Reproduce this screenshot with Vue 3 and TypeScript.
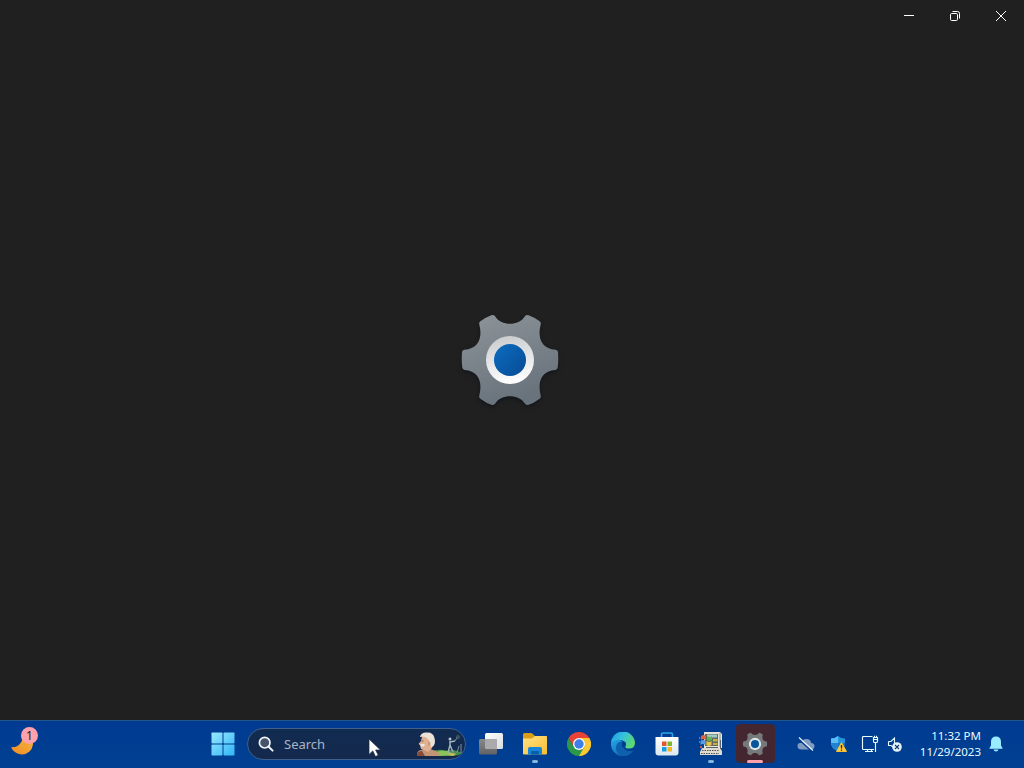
<script setup lang="ts">
import { ref } from 'vue'

const gearPath =
  'M137 51C153 78 207 78 223 51Q227 43 236 46Q255 53 269 64Q274 68 272 74C262 112 274 146 317 149Q323 150 324 156Q326 180 323 204Q321 209 316 210C274 213 262 246 272 286Q274 292 269 296Q252 309 234 315Q227 316 223 309C207 282 153 282 137 309Q133 316 126 315Q108 309 91 296Q86 292 88 286C98 246 86 213 44 210Q39 209 37 204Q34 180 36 156Q37 150 43 149C86 146 98 112 88 74Q86 68 91 64Q105 53 124 46Q133 43 137 51Z'

const badge = ref<number>(1)
const time = ref<string>('11:32 PM')
const date = ref<string>('11/29/2023')
</script>

<template>
  <div class="screen">
    <main class="window">
      <header class="titlebar">
        <button class="caption" aria-label="Minimize">
          <svg width="12" height="12" viewBox="0 0 12 12"><path d="M1 5.5h10" stroke="#fff" /></svg>
        </button>
        <button class="caption" aria-label="Restore">
          <svg width="12" height="12" viewBox="0 0 12 12" fill="none" stroke="#fff">
            <rect x="1.5" y="3.5" width="7" height="7" rx="1.2" />
            <path d="M3.5 1.5h5q2 0 2 2v5" />
          </svg>
        </button>
        <button class="caption" aria-label="Close">
          <svg width="12" height="12" viewBox="0 0 12 12"><path d="M1 1l10 10M11 1L1 11" stroke="#fff" stroke-width="1" /></svg>
        </button>
      </header>
      <section class="splash">
        <svg class="gear" width="120" height="120" viewBox="0 0 360 360">
          <defs>
            <linearGradient id="gearBody" x1="0" y1="0" x2="0.4" y2="1">
              <stop offset="0" stop-color="#8e959a" /><stop offset="1" stop-color="#69737c" />
            </linearGradient>
            <linearGradient id="gearRing" x1="0" y1="0" x2="0.2" y2="1">
              <stop offset="0" stop-color="#c6c8ca" /><stop offset="1" stop-color="#fdfdfd" />
            </linearGradient>
            <linearGradient id="gearHub" x1="0" y1="0" x2="1" y2="1">
              <stop offset="0" stop-color="#0d6cc0" /><stop offset="1" stop-color="#074b94" />
            </linearGradient>
          </defs>
          <path :d="gearPath" fill="url(#gearBody)" />
          <circle cx="180" cy="180" r="72" fill="url(#gearRing)" />
          <circle cx="180" cy="180" r="48" fill="url(#gearHub)" />
        </svg>
      </section>
    </main>

    <footer class="taskbar">
      <div class="widgets">
        <svg width="26" height="20" viewBox="0 0 26 20">
          <defs>
            <linearGradient id="moon" x1="0" y1="1" x2="1" y2="0">
              <stop offset="0" stop-color="#ee8b24" /><stop offset="1" stop-color="#f9b53f" />
            </linearGradient>
          </defs>
          <path d="M0 10.2Q9 11 12 1L21 0Q24 9 18.5 14.5Q14 18.500 8 17Q2.500 15.500 0 10.200Z" fill="url(#moon)" />
        </svg>
        <span class="badge">{{ badge }}</span>
      </div>

      <nav class="apps">
        <div class="app start">
          <svg width="24" height="24" viewBox="0 0 24 24">
            <defs>
              <linearGradient id="win" x1="0" y1="0" x2="24" y2="24" gradientUnits="userSpaceOnUse">
                <stop offset="0" stop-color="#9aeaff" /><stop offset="1" stop-color="#2fb4f6" />
              </linearGradient>
            </defs>
            <g fill="url(#win)">
              <rect x="0.500" y="0.500" width="11" height="11" rx="0.800" /><rect x="12.500" y="0.500" width="11" height="11" rx="0.800" />
              <rect x="0.500" y="12.500" width="11" height="11" rx="0.800" /><rect x="12.500" y="12.500" width="11" height="11" rx="0.800" />
            </g>
          </svg>
        </div>

        <div class="search">
          <svg width="16" height="16" viewBox="0 0 16 16" fill="none">
            <circle cx="6.700" cy="6.700" r="5.300" fill="#46536b" stroke="#f0f3f7" stroke-width="1.700" />
            <path d="M10.700 10.700L14.600 14.600" stroke="#f0f3f7" stroke-width="2" stroke-linecap="round" />
          </svg>
          <span class="placeholder">Search</span>
          <svg class="art" width="48" height="28" viewBox="0 0 48 28">
            <path d="M15 22Q22 18 28 21Q37 18 45 23Q42 26 34 26H12Z" fill="#3f8f4c" />
            <path d="M20 22Q28 18 38 25L22 26Z" fill="#8ac35a" />
            <path d="M31 25q4-4 8-1l-3 2z" fill="#c9bd55" />
            <path d="M0 25Q0 20 5 20L9 17L16 20Q22 21 23 26H2Z" fill="#c39575" />
            <path d="M0 25q0-4 5-4l3 5H1z" fill="#894b38" />
            <path d="M5 7Q7 2 14 4L17 11L15 18L11 22L7 20L4 19L3 15L1.500 14L4 11Z" fill="#dfb193" />
            <path d="M3 7Q4 2 10 2.500Q16 2 17.500 8Q19 13 16 16.500L14 17L13 12L10 8Q7 6 3 7Z" fill="#ebe2d5" />
            <path d="M3 14l5 0-1 2.500-3 0z" fill="#eee4dc" />
            <path d="M4.500 11h2" stroke="#8d5f4d" />
            <path d="M11 12q3-1 2 3l-2 1" fill="#cf9678" />
            <path d="M33 11v4l-2 8M33 15l3 7M33 12l5-1" fill="none" stroke="#a4b4b8" stroke-width="1.500" />
            <path d="M38 11l3-5M36 24v-4M40 23l2-7M44 23V14" fill="none" stroke="#7d939c" stroke-width="1" />
            <circle cx="33" cy="9" r="1.500" fill="#b8c5ca" />
            <circle cx="41" cy="7" r="2" fill="#3f5364" />
          </svg>
        </div>

        <div class="app">
          <svg width="24" height="24" viewBox="0 0 24 24">
            <defs>
              <linearGradient id="taskBack" x1="0" y1="0" x2="1" y2="1"><stop stop-color="#fff" /><stop offset="1" stop-color="#d8dce1" /></linearGradient>
              <linearGradient id="taskFront" x1="0" y1="0" x2="0" y2="1"><stop stop-color="#89898c" /><stop offset="1" stop-color="#626266" /></linearGradient>
            </defs>
            <rect x="6" y="1" width="18" height="16" rx="1.500" fill="url(#taskBack)" />
            <rect x="0" y="7" width="18" height="15.500" rx="1.500" fill="url(#taskFront)" />
            <path d="M6 7h11q1 0 1 1v9H7.500Q6 17 6 15.500z" fill="#aaaaad" />
          </svg>
        </div>

        <div class="app">
          <svg width="26" height="24" viewBox="0 0 26 24">
            <defs>
              <linearGradient id="folder" x1="0" y1="0" x2="1" y2="1"><stop stop-color="#ffe285" /><stop offset="1" stop-color="#f8bd31" /></linearGradient>
            </defs>
            <path d="M1 20V2.500Q1 1 2.500 1h6.300q1 0 1.700.8L13 4h11q1 0 1 1v12z" fill="#dc9d16" />
            <path d="M1 6.500h8q1 0 2-.8L13 4h11q1 0 1 1v16.500q0 1-1 1H2q-1 0-1-1z" fill="url(#folder)" />
            <path d="M6 22.500V17q0-2 2-2h10q2 0 2 2v5.500z" fill="#1784d7" />
            <path d="M9 22.500V20q0-1 1-1h6q1 0 1 1v2.500z" fill="#0860aa" />
          </svg>
          <i class="pill"></i>
        </div>

        <div class="app">
          <svg width="24" height="24" viewBox="0 0 24 24">
            <path d="M22.400 6A12 12 0 0 1 12 24L9.500 19L17.200 15L17.200 9L12 6z" fill="#fcc931" />
            <path d="M1.600 6A12 12 0 0 0 12 24L17.200 15L12 17.500L6.800 15z" fill="#29984b" />
            <path d="M1.600 6L6.800 15L12 6H22.400A12 12 0 0 0 1.600 6z" fill="#e84335" />
            <circle cx="12" cy="12" r="6" fill="#fff" /><circle cx="12" cy="12" r="4.700" fill="#3f7fe8" />
          </svg>
        </div>

        <div class="app">
          <svg width="24" height="24" viewBox="0 0 24 24">
            <defs>
              <linearGradient id="edgeTop" x1="0" y1="0" x2="1" y2="0.500"><stop stop-color="#1c9bdc" /><stop offset="0.500" stop-color="#35c0e0" /><stop offset="1" stop-color="#5bd870" /></linearGradient>
              <linearGradient id="edgeLow" x1="0" y1="0" x2="1" y2="1"><stop stop-color="#24a7e8" /><stop offset="1" stop-color="#1058a8" /></linearGradient>
            </defs>
            <path d="M0 12A12 12 0 0 0 12 24Q18.500 24 22.400 18.500Q18 20.500 14 17.800Q8.500 14 11.500 9.500Q5 4 0 12z" fill="url(#edgeLow)" />
            <path d="M8.500 23.500Q3 18 6 12Q8 9 11.500 9.500Q8.500 14 14 17.800Q18 20.500 22.400 18.500Q18 25 8.500 23.500z" fill="#0f60ac" />
            <path d="M0 12A12 12 0 0 1 24 11Q24 16.500 18 16.500Q13.500 16.500 14.500 14.500Q16.500 10 11.500 8.500Q4.500 6 0 12z" fill="url(#edgeTop)" />
          </svg>
        </div>

        <div class="app">
          <svg width="24" height="26" viewBox="0 0 24 26">
            <defs>
              <linearGradient id="bag" x1="0" y1="0" x2="0" y2="1"><stop stop-color="#fff" /><stop offset="1" stop-color="#dbe7ef" /></linearGradient>
            </defs>
            <path d="M6.500 7V3.500Q6.500 2 8 2h8q1.500 0 1.500 1.500V7" fill="none" stroke="#29a7e9" stroke-width="1.700" />
            <path d="M.5 6h23v15.500q0 3-3 3h-17q-3 0-3-3z" fill="url(#bag)" />
            <path d="M7 10.500h4.500V15H7z" fill="#e0562f" /><path d="M12.500 10.500H17V15h-4.500z" fill="#7cb829" />
            <path d="M7 16h4.500v4.500H7z" fill="#159ddd" /><path d="M12.500 16H17v4.500h-4.500z" fill="#f7b51d" />
          </svg>
        </div>

        <div class="app">
          <svg width="24" height="26" viewBox="0 0 24 26">
            <path d="M5 1h16l2 2v14H5z" fill="#e6e4d8" /><path d="M20 2h2v14h-2z" fill="#b9b8af" />
            <path d="M6 3h13v12H6z" fill="#5d6c62" /><path d="M8 3.500h10v3H8z" fill="#a3cbc6" />
            <path d="M3 17h18l2 3v4H1v-3z" fill="#dedbce" /><path d="M3 19.500h17M2 22.500h18" stroke="#4d535a" stroke-width="1.200" stroke-dasharray="1.500 1" />
            <path d="M2 5q3-2 5 0v4q-3-2-5 0z" fill="#e0603f" /><path d="M8 5q3 2 5 0v4q-3 2-5 0z" fill="#65b34a" />
            <path d="M1.500 10q3-2 5 0v4q-3-2-5 0z" fill="#5a9ddc" /><path d="M7.500 10q3 2 5 0v4q-3 2-5 0z" fill="#ecc243" />
            <path d="M14 8h4.500v2.500H14zm0 4h4.500v2H14z" fill="#c8ad48" /><path d="M0 6h1.300v2H0zm0 4h1v2H0zm1 5h2v2H1z" fill="#c85a48" />
            <path d="M7 16.500h12M21.500 9v9" stroke="#5c646a" />
          </svg>
          <i class="pill"></i>
        </div>

        <div class="app">
          <div class="active-app">
            <svg width="30" height="30" viewBox="0 0 360 360">
              <path :d="gearPath" fill="#75797b" />
              <circle cx="180" cy="180" r="74" fill="#dbe5ec" /><circle cx="180" cy="180" r="48" fill="#07569c" />
            </svg>
          </div>
          <i class="pill active"></i>
        </div>
      </nav>

      <div class="tray">
        <svg class="cloud" width="18" height="16" viewBox="0 0 18 16">
          <path d="M4.500 13.500Q.5 13.500.5 10t3.500-3Q5.500 3 9.500 3t4.700 4q3.300.200 3.300 3.200t-3.500 3.300z" fill="#7f9bc3" />
          <path d="M1.500 3l13 12" stroke="#073b85" stroke-width="1.500" /><path d="M2 1.500l14 13" stroke="#e7f2fb" stroke-width="1.200" />
        </svg>
        <svg class="shield" width="18" height="18" viewBox="0 0 18 18">
          <path d="M8 1Q11 3.500 15 3.500V8q0 5-7 8Q1 13 1 8V3.500Q5 3.500 8 1z" fill="#2594df" />
          <path d="M8 1v15Q1 13 1 8V3.500Q5 3.500 8 1z" fill="#5abdf3" /><path d="M1 8h14q0 5-7 8-7-3-7-8z" fill="#0e6fc4" opacity=".75" />
          <path d="M11.500 7.500L16.500 16.500H6.500z" fill="#ffcb3e" stroke="#f7bd2d" stroke-linejoin="round" />
          <path d="M11.500 10v3.500M11.500 14.500v1.300" stroke="#262216" stroke-width="1.300" />
        </svg>
        <svg class="network" width="18" height="18" viewBox="0 0 18 18" fill="none" stroke="#e5fbff" stroke-width="1.150">
          <path d="M11.500 1.500H2.500q-1 0-1 1v11q0 1 1 1H13M4 16.500h8M6.500 14.500v2M10.500 14.500v2M14.500 7.500v9.500" />
          <path d="M12.500 2.500h4v4q0 1-1 1h-2q-1 0-1-1zM13.500 2.500V.8M15.500 2.500V.8M13 4.500h3" />
        </svg>
        <svg class="volume" width="16" height="16" viewBox="0 0 16 16">
          <path d="M1.500 5.500H4L7.500 2v5M1.500 5.500v4H4L6 11" fill="none" stroke="#e5fbff" stroke-width="1.100" />
          <circle cx="10" cy="11" r="4.800" fill="#e6f4fa" /><path d="M8 9l4 4M12 9l-4 4" stroke="#153968" stroke-width="1.100" />
        </svg>
        <div class="clock"><span>{{ time }}</span><span>{{ date }}</span></div>
        <svg class="bell" width="14" height="16" viewBox="0 0 14 16">
          <path d="M7 .5Q12 .5 12 6v3.500l1.500 2.500v.7H.5V12L2 9.500V6Q2 .5 7 .5zM4.500 13.500h5Q9 15.500 7 15.500t-2.500-2z" fill="#99ecff" />
        </svg>
      </div>
    </footer>

    <svg class="cursor" width="14" height="20" viewBox="0 0 14 20">
      <path d="M1 1v15.500l3.800-3.600 2.700 5.600 2.800-1.300L7.600 12H12.500z" fill="#fff" stroke="#1b2739" stroke-width=".7" />
    </svg>
  </div>
</template>

<style>
body { margin: 0; overflow: hidden; }
</style>

<style scoped>
.screen { width: 1024px; height: 768px; display: flex; flex-direction: column; font-family: "Noto Sans", "Open Sans", sans-serif; background: #202020; }
svg { display: block; flex: none; }
.window { height: 720px; display: flex; flex-direction: column; background: #202020; }
.titlebar { height: 32px; display: flex; justify-content: flex-end; flex: none; }
.caption { width: 46px; height: 32px; padding: 0; border: 0; background: transparent; display: flex; align-items: center; justify-content: center; }
.splash { flex: 1; display: flex; justify-content: center; padding: 268px 4px 0 0; }
.gear { filter: drop-shadow(0 2px 2px #12151a); }
.taskbar { box-sizing: border-box; height: 48px; display: flex; border-top: 1px solid #23568a; background: linear-gradient(#003b91, #004092); }
.widgets { width: 200px; display: flex; position: relative; box-sizing: border-box; padding: 16px 0 0 11px; flex: none; }
.badge { position: absolute; left: 21px; top: 6px; width: 17px; height: 17px; border-radius: 50%; background: #ffa1ad; color: #251820; display: flex; align-items: center; justify-content: center; font-size: 12px; line-height: 17px; }
.apps { width: 577px; display: flex; flex: none; align-items: center; }
.app { box-sizing: border-box; width: 44px; height: 47px; padding-bottom: 2px; flex: none; position: relative; display: flex; align-items: center; justify-content: center; }
.start { padding-left: 1px; }
.search { box-sizing: border-box; width: 219px; height: 32px; margin: 0 3px 2px; border: 1px solid #40608c; border-radius: 16px; background: linear-gradient(#112b50, #14294d); display: flex; align-items: center; flex: none; padding-left: 10px; }
.placeholder { color: #a8b5c7; font-size: 13px; line-height: 18px; margin-left: 10px; width: 133px; }
.pill { position: absolute; bottom: 5px; left: 19px; width: 6px; height: 3px; border-radius: 2px; background: #85b5df; }
.pill.active { left: 14px; width: 16px; background: #ffa1ad; }
.active-app { width: 39px; height: 39px; border-radius: 4px; display: flex; align-items: center; justify-content: center; background: #442630; }
.tray { width: 247px; display: flex; align-items: center; box-sizing: border-box; padding: 0 0 2px 20px; }
.shield { margin-left: 15px; }
.network { margin-left: 13px; }
.volume { margin-left: 8px; }
.clock { width: 78px; display: flex; flex-direction: column; align-items: flex-end; color: #e9f8ff; font-size: 11.5px; line-height: 16px; white-space: nowrap; }
.bell { margin-left: 8px; }
.cursor { position: absolute; left: 368px; top: 738px; }
</style>
